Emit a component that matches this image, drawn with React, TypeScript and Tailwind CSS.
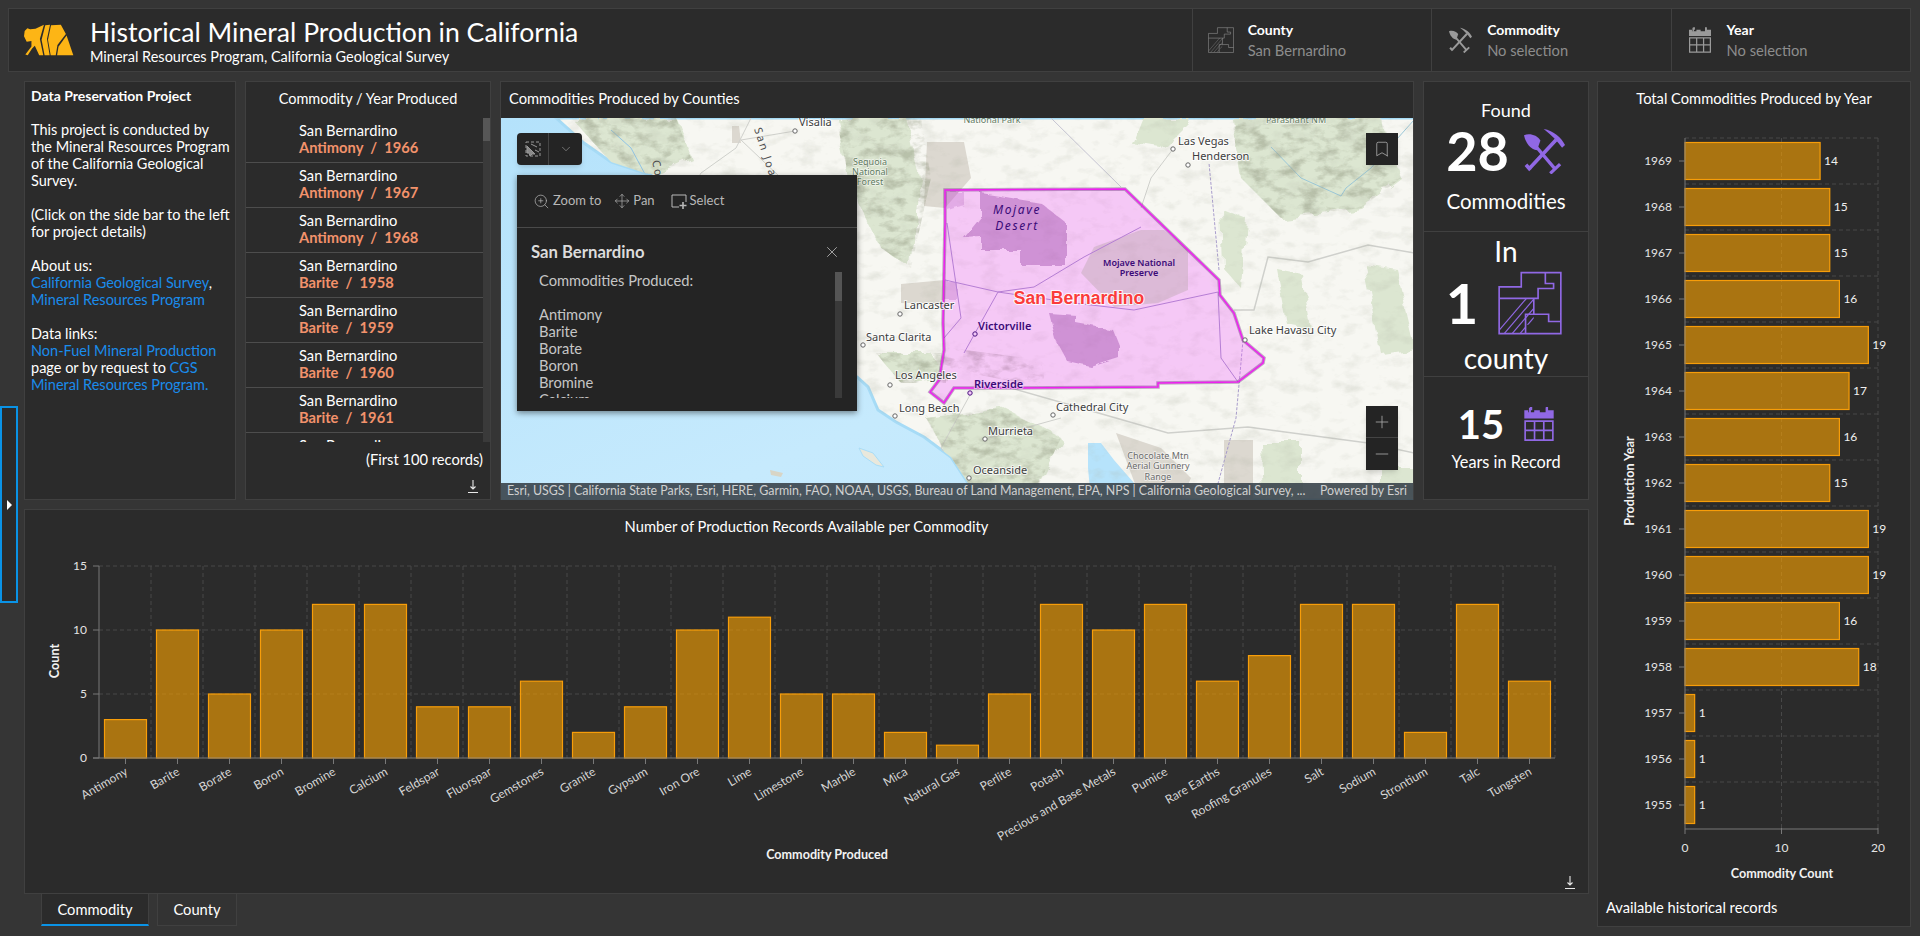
import React from "react";
import { ZoomIn, Move, X, Plus, Minus, ChevronDown, Bookmark } from "lucide-react";

const commodityData: [string, number][] = [
  ["Antimony", 3], ["Barite", 10], ["Borate", 5], ["Boron", 10], ["Bromine", 12], ["Calcium", 12], ["Feldspar", 4],
  ["Fluorspar", 4], ["Gemstones", 6], ["Granite", 2], ["Gypsum", 4], ["Iron Ore", 10], ["Lime", 11], ["Limestone", 5],
  ["Marble", 5], ["Mica", 2], ["Natural Gas", 1], ["Perlite", 5], ["Potash", 12], ["Precious and Base Metals", 10],
  ["Pumice", 12], ["Rare Earths", 6], ["Roofing Granules", 8], ["Salt", 12], ["Sodium", 12], ["Strontium", 2], ["Talc", 12], ["Tungsten", 6],
];
const yearData: [number, number][] = [
  [1969, 14], [1968, 15], [1967, 15], [1966, 16], [1965, 19], [1964, 17], [1963, 16], [1962, 15], [1961, 19], [1960, 19], [1959, 16], [1958, 18], [1957, 1], [1956, 1], [1955, 1],
];
const records: [string, number][] = [
  ["Antimony", 1966], ["Antimony", 1967], ["Antimony", 1968], ["Barite", 1958], ["Barite", 1959], ["Barite", 1960], ["Barite", 1961], ["Barite", 1962],
];

const BAR_FILL = "#ffa500";
const BAR_STROKE = "#f79d09";
const GRID = "#484848";
const AXIS = "#787878";

function Bear() {
  return (
    <svg width="50" height="32" viewBox="26 26 148 94" fill="#fdb515" className="shrink-0">
      <path d="M28 46 L36 38 L44 41 L60 40 L85 28 L73 70 L83 118 L71 118 L58 90 L50 98 L37 118 L30 116 L48 92 L48 76 L34 78 L26 62 Z" />
      <path d="M89 29 L103 28 L94 70 L102 118 L87 118 L78 72 Z" />
      <path d="M106 29 L135 28 L150 55 L125 88 L120 118 L105 118 L97 72 Z" />
      <path d="M152 60 L172 118 L124 118 L128 93 Z" />
    </svg>
  );
}

function PickIcon({ color, width, height }: { color: string; width: number; height: number }) {
  return (
    <svg width={width} height={height} viewBox="0 0 125 140" className="shrink-0">
      <path d="M0 22 C18 15 40 22 50 38 L40 68 C20 65 5 45 0 22 Z" fill={color} />
      <path d="M38 58 L95 125 M80 138 L110 110" stroke={color} strokeWidth="10" fill="none" />
      <path d="M60 3 C90 8 115 30 125 52 L116 60 C102 40 85 22 60 3 Z" fill={color} />
      <path d="M98 36 L18 122 M6 112 L20 128" stroke={color} strokeWidth="11" fill="none" />
    </svg>
  );
}

function CountyIcon({ color, width, height, id, sw }: { color: string; width: number; height: number; id: string; sw: number }) {
  return (
    <svg width={width} height={height} viewBox="-3 -3 193 194" className="shrink-0">
      <defs>
        <clipPath id={id}>
          <path d="M0 80 H105 V160 H80 V187 H0 Z" />
        </clipPath>
      </defs>
      <g clipPath={`url(#${id})`} stroke={color} strokeWidth={sw * 0.7}>
        {Array.from({ length: 12 }).map((_, i) => (
          <line key={i} x1={-20 + i * 24} y1="200" x2={100 + i * 24} y2="60" />
        ))}
      </g>
      <path
        d="M67 2 H187 V187 H0 V45 H67 Z M0 80 H118 V50 H165 V35 H140 V2 M105 80 V128 H80 V187 M105 128 H150 V150 H187"
        fill="none"
        stroke={color}
        strokeWidth={sw}
      />
    </svg>
  );
}

function CalendarIcon({ color, width, height }: { color: string; width: number; height: number }) {
  return (
    <svg width={width} height={height} viewBox="0 0 89 103" className="shrink-0">
      <path d="M0 10 H17 V0 H24 V10 H30 V16 H12 V10 M0 10 V35 H89 V10 H72 V0 H65 V16 H47 V10 H0 Z" fill={color} />
      <path d="M17 2 V18 M68 2 V18" stroke={color} strokeWidth="6" />
      <path d="M2.5 43 H86.5 V100.5 H2.5 Z M31 43 V100 M59 43 V100 M2 71 H87" fill="none" stroke={color} strokeWidth="5" />
    </svg>
  );
}

function Download({ className }: { className?: string }) {
  return (
    <svg width="10" height="14" viewBox="0 0 10 14" className={className}>
      <path d="M5 0 V9 M2.5 6.5 L5 9 L7.5 6.5 M0 12.5 H10" fill="none" stroke="#e8e8e8" strokeWidth="1.1" />
    </svg>
  );
}

function Selector({ title, value, icon }: { title: string; value: string; icon: React.ReactNode }) {
  return (
    <div className="flex h-full w-[239.5px] items-center border-l border-[#404040]">
      <div className="flex w-[55px] justify-center pl-[2px]">{icon}</div>
      <div className="flex flex-col">
        <span className="text-[14px] leading-[21px] font-bold text-white">{title}</span>
        <span className="text-[14.7px] leading-[21px] text-[#8d8d8d]">{value}</span>
      </div>
    </div>
  );
}

function BottomChart() {
  const x0 = 99, y0 = 758, unit = 12.8, pitch = 52;
  return (
    <svg width="1563" height="328" viewBox="25 544 1563 328" className="block">
      {[5, 10, 15].map((v) => (
        <line key={v} x1={x0} x2={1555} y1={y0 - v * unit} y2={y0 - v * unit} stroke={GRID} strokeDasharray="4 3" />
      ))}
      {commodityData.map((_, i) => (
        <line key={i} x1={x0 + (i + 1) * pitch} x2={x0 + (i + 1) * pitch} y1={566} y2={y0} stroke={GRID} strokeDasharray="4 3" />
      ))}
      {commodityData.map(([n, v], i) => {
        const cx = x0 + i * pitch + 26.5;
        return (
          <g key={n}>
            <rect x={cx - 21} y={y0 - v * unit} width={42} height={v * unit} fill={BAR_FILL} fillOpacity={0.6} stroke={BAR_STROKE} strokeWidth={1.2} />
            <line x1={cx} x2={cx} y1={y0} y2={y0 + 6} stroke={AXIS} />
            <text x={cx + 3} y={y0 + 16} textAnchor="end" transform={`rotate(-30 ${cx + 3} ${y0 + 16})`} fontSize="12" fill="#d6d6d6">
              {n}
            </text>
          </g>
        );
      })}
      <line x1={x0} x2={x0} y1={566} y2={y0} stroke={AXIS} />
      <line x1={93} x2={1555} y1={y0} y2={y0} stroke={AXIS} />
      {[0, 5, 10, 15].map((v) => (
        <g key={v}>
          <line x1={93} x2={x0} y1={y0 - v * unit} y2={y0 - v * unit} stroke={AXIS} />
          <text x={87} y={y0 - v * unit + 4} textAnchor="end" fontSize="12" fill="#e4e4e4">{v}</text>
        </g>
      ))}
      <text x={59} y={661} textAnchor="middle" transform="rotate(-90 59 661)" fontSize="12.6" fontWeight="700" fill="#f2f2f2">Count</text>
      <text x={827} y={859} textAnchor="middle" fontSize="12.6" fontWeight="700" fill="#f2f2f2">Commodity Produced</text>
    </svg>
  );
}

function RightChart() {
  const x0 = 1685, top = 138, band = 46, unit = 9.65, bottom = 828;
  return (
    <svg width="312" height="770" viewBox="1598 118 312 770" className="block">
      {yearData.map((_, i) => (
        <line key={i} x1={x0} x2={1878} y1={top + i * band} y2={top + i * band} stroke={GRID} strokeDasharray="4 3" />
      ))}
      {[10, 20].map((v) => (
        <line key={v} x1={x0 + v * unit} x2={x0 + v * unit} y1={top} y2={bottom} stroke={GRID} strokeDasharray="4 3" />
      ))}
      {yearData.map(([y, v], i) => {
        const by = top + i * band + 4.5;
        return (
          <g key={y}>
            <rect x={x0} y={by} width={v * unit} height={37} fill={BAR_FILL} fillOpacity={0.6} stroke={BAR_STROKE} strokeWidth={1.2} />
            <line x1={1679} x2={x0} y1={by + 18.5} y2={by + 18.5} stroke={AXIS} />
            <text x={1672} y={by + 22.5} textAnchor="end" fontSize="12" fill="#e4e4e4">{y}</text>
            <text x={x0 + v * unit + 4} y={by + 22.5} fontSize="12" fill="#f0f0f0">{v}</text>
          </g>
        );
      })}
      <line x1={x0} x2={x0} y1={top} y2={bottom} stroke={AXIS} />
      <line x1={x0} x2={1878} y1={bottom + 1} y2={bottom + 1} stroke={AXIS} />
      {[0, 10, 20].map((v) => (
        <g key={v}>
          <line x1={x0 + v * unit} x2={x0 + v * unit} y1={bottom} y2={bottom + 6} stroke={AXIS} />
          <text x={x0 + v * unit} y={852} textAnchor="middle" fontSize="12" fill="#e4e4e4">{v}</text>
        </g>
      ))}
      <text x={1782} y={878} textAnchor="middle" fontSize="12.6" fontWeight="700" fill="#f2f2f2">Commodity Count</text>
      <text x={1634} y={481} textAnchor="middle" transform="rotate(-90 1634 481)" fontSize="12.6" fontWeight="700" fill="#f2f2f2">Production Year</text>
    </svg>
  );
}

function City({ x, y, cx, cy, children, dark }: { x: number; y: number; cx: number; cy: number; children: string; dark?: boolean }) {
  return (
    <g>
      <circle cx={cx} cy={cy} r="2.2" fill={dark ? "#f3c8f8" : "#fff"} stroke={dark ? "#4a1280" : "#666"} strokeWidth="1" />
      <text
        x={x}
        y={y + 4}
        fontSize="11"
        fontWeight={dark ? 600 : 400}
        fill={dark ? "#3c0a78" : "#3e3e3e"}
        stroke={dark ? "#f3c8f8" : "#ffffff"}
        strokeOpacity="0.75"
        strokeWidth="2"
        paintOrder="stroke"
        className="font-['Noto_Sans',sans-serif]"
      >
        {children}
      </text>
    </g>
  );
}

function MapArt() {
  const county = "M444 72 L624 71 L718 162 L719 177 L733 195 L742 222 L763 240 L762 245 L737 264 L657 265 L657 269 L510 270 L453 270 L443 285 L429 274 L438 262 L443 232 L442 205 L444 105 Z";
  const land = "M55 0 L83 25 L110 44 L150 57 L200 120 L280 200 L340 250 L356 259 L367 269 L377 292 L395 304 L423 319 L450 339 L467 365 L472 382 L914 382 L914 0 Z";
  const mountains = "M70 0 L175 0 L190 40 L150 58 L110 44 Z M335 0 L420 0 L430 60 L410 150 L380 130 L350 70 Z M730 0 L880 0 L900 60 L860 90 L780 100 L740 60 Z M425 300 L500 290 L560 320 L530 382 L470 382 Z M375 235 L445 235 L445 265 L400 265 Z M443 229 L540 242 L545 270 L443 250 Z";
  return (
    <svg width="914" height="382" viewBox="0 0 914 382" className="block">
      <defs>
        <filter id="rough" x="-5%" y="-5%" width="110%" height="110%">
          <feTurbulence type="fractalNoise" baseFrequency="0.05" numOctaves="3" seed="7" />
          <feDisplacementMap in="SourceGraphic" scale="14" />
        </filter>
        <filter id="roughSmall" x="-5%" y="-5%" width="110%" height="110%">
          <feTurbulence type="fractalNoise" baseFrequency="0.08" numOctaves="2" seed="3" />
          <feDisplacementMap in="SourceGraphic" scale="7" />
        </filter>
        <filter id="shade" x="0" y="0" width="100%" height="100%">
          <feTurbulence type="fractalNoise" baseFrequency="0.05 0.08" numOctaves="4" seed="11" />
          <feColorMatrix values="0 0 0 0 0.42  0 0 0 0 0.44  0 0 0 0 0.36  1.2 0 0 0 -0.6" />
        </filter>
        <filter id="shadeHard" x="0" y="0" width="100%" height="100%">
          <feTurbulence type="fractalNoise" baseFrequency="0.06 0.1" numOctaves="4" seed="5" />
          <feColorMatrix values="0 0 0 0 0.33  0 0 0 0 0.36  0 0 0 0 0.26  3 0 0 0 -1.35" />
        </filter>
        <clipPath id="landClip"><path d={land} /></clipPath>
        <clipPath id="countyClip"><path d={county} /></clipPath>
        <clipPath id="mountainClip"><path d={mountains} /></clipPath>
        <linearGradient id="sea" x1="0" y1="0" x2="1" y2="1">
          <stop offset="0" stopColor="#b4e2fb" />
          <stop offset="0.6" stopColor="#c6eafd" />
          <stop offset="1" stopColor="#bfe7fc" />
        </linearGradient>
      </defs>
      <rect width="914" height="382" fill="url(#sea)" />
      <path d={land} fill="#f7f7f2" stroke="#a6dbf6" strokeWidth="3" />
      <path d="M269 352 L282 355 L280 359 L270 357 Z" fill="#d8d5c6" />
      <path d="M358 330 L372 335 L383 349 L375 347 L362 338 Z" fill="#e9e8dc" stroke="#a9ddf7" />
      <g clipPath="url(#landClip)">
        <g filter="url(#rough)" fill="#dce6d1">
          <path d="M70 0 L175 0 L190 40 L150 58 L110 44 Z" />
          <path d="M335 0 L405 0 L420 60 L410 150 L380 130 L350 70 Z" />
          <path d="M730 0 L880 0 L900 60 L860 90 L780 100 L740 60 Z" />
          <path d="M640 0 L690 0 L660 30 L630 25 Z" />
          <path d="M425 300 L500 290 L560 320 L530 382 L470 382 Z" />
          <path d="M375 235 L430 235 L445 260 L400 265 Z" />
          <path d="M720 90 L745 100 L740 170 L722 150 Z" />
          <path d="M775 150 L800 155 L810 210 L785 205 Z" />
          <path d="M862 145 L895 150 L914 230 L880 235 Z" />
          <path d="M760 325 L800 325 L800 382 L762 382 Z" />
          <path d="M880 350 L914 350 L914 382 L880 382 Z" />
        </g>
        <g fill="#dcd8d0">
          <path d="M426 24 L463 24 L470 60 L444 90 L423 88 Z" />
          <path d="M400 166 L444 162 L444 185 L400 185 Z" />
          <path d="M723 322 L752 322 L752 382 L723 382 Z" />
          <path d="M615 315 L660 330 L690 360 L680 382 L640 382 Z" />
          <path d="M231 8 L238 8 L240 25 L231 25 Z" />
        </g>
        <path d="M587 325 L600 325 L613 342 L633 365 L640 382 L590 382 L587 350 Z" fill="#b6e3fb" />
        <g fill="none" stroke="#cfd0cc" strokeWidth="1">
          <path d="M733 192 L753 192 L767 139 L807 144 L867 127 L913 135" strokeWidth="1.5" />
          <path d="M510 270 L587 292 L667 315 L747 309 L867 325 L913 335" strokeWidth="1.5" />
          <path d="M550 0 L620 69" stroke="#c5c4d2" />
          <path d="M672 31 L650 60 L640 90" />
          <path d="M250 0 L235 30 L200 55 L180 90 M294 13 L240 22 L280 60 M470 275 L440 330 L470 380 M484 321 L560 300" />
        </g>
        <path d="M770 29 L800 60 L840 78 L845 70 L870 50 L913 2" fill="none" stroke="#9ac7d8" strokeWidth="1" />
        <path d="M110 12 L130 30 L145 58" fill="none" stroke="#8fc4e6" strokeWidth="1" />
        <path d="M718 152 L708 45 M742 222 L735 300 L713 380" fill="none" stroke="#a89ccc" strokeWidth="1" strokeDasharray="3 1.5" />
        <rect width="914" height="382" filter="url(#shade)" opacity="0.5" />
        <g clipPath="url(#mountainClip)">
          <rect width="914" height="382" filter="url(#shadeHard)" opacity="0.55" />
        </g>
      </g>
      <g clipPath="url(#countyClip)">
        <rect width="914" height="382" fill="#f35cff" fillOpacity="0.3" />
        <g fill="#8a2f9c" fillOpacity="0.36" filter="url(#roughSmall)">
          <path d="M480 75 L540 85 L565 105 L565 147 L520 147 L520 132 L480 132 L480 119 L463 120 L480 99 Z" />
          <path d="M548 195 L575 197 L575 205 L612 212 L618 227 L618 240 L590 249 L567 244 L555 222 Z" />
          <path d="M444 74 L463 74 L463 87 L447 92 Z" fillOpacity="0.18" />
          <path d="M443 164 L455 164 L455 182 L443 182 Z" fillOpacity="0.2" />
        </g>
        <path d="M640 112 L663 112 L687 132 L687 172 L657 185 L613 189 L580 155 L593 129 Z" fill="#b9a6ac" fillOpacity="0.42" />
        <g fill="none" stroke="#b57ed4" strokeWidth="1">
          <path d="M444 162 L497 174 L533 169 L583 139 L640 109" />
          <path d="M497 174 L483 199 L463 235" />
          <path d="M497 174 L573 185 L633 192 L717 174" />
          <path d="M446 105 L460 200 L443 220 M717 174 L720 240 L737 264" />
        </g>
      </g>
      <path d={county} fill="none" stroke="#5a1a6c" strokeOpacity="0.35" strokeWidth="3.5" />
      <path d={county} fill="none" stroke="#ef1ff0" strokeWidth="1.5" />

      <City x={298} y={4} cx={294} cy={13}>Visalia</City>
      <City x={677} y={23} cx={672} cy={31}>Las Vegas</City>
      <City x={691} y={38} cx={687} cy={47}>Henderson</City>
      <City x={403} y={187} cx={399} cy={196}>Lancaster</City>
      <City x={365} y={219} cx={362} cy={227}>Santa Clarita</City>
      <City x={394} y={257} cx={389} cy={267}>Los Angeles</City>
      <City x={398} y={290} cx={394} cy={298}>Long Beach</City>
      <City x={748} y={212} cx={744} cy={222}>Lake Havasu City</City>
      <City x={477} y={208} cx={474} cy={216} dark>Victorville</City>
      <City x={473} y={266} cx={469} cy={275} dark>Riverside</City>
      <City x={555} y={289} cx={552} cy={297}>Cathedral City</City>
      <City x={487} y={313} cx={484} cy={321}>Murrieta</City>
      <City x={472} y={352} cx={468} cy={360}>Oceanside</City>

      <g className="font-['Noto_Sans',sans-serif]" fontSize="9" textAnchor="middle" stroke="#fff" strokeOpacity="0.6" strokeWidth="1.5" paintOrder="stroke">
        <g fill="#5f7a5f">
          <text x={369} y={47}>Sequoia</text>
          <text x={369} y={57}>National</text>
          <text x={369} y={67}>Forest</text>
          <text x={491} y={5}>National Park</text>
          <text x={795} y={5}>Parashant NM</text>
        </g>
        <g fill="#6a6a6a">
          <text x={657} y={341}>Chocolate Mtn</text>
          <text x={657} y={351}>Aerial Gunnery</text>
          <text x={657} y={362}>Range</text>
        </g>
        <g fill="#3a0a78" fontWeight="600" stroke="none">
          <text x={638} y={148}>Mojave National</text>
          <text x={638} y={158}>Preserve</text>
        </g>
      </g>
      <g className="font-['Noto_Sans',sans-serif]" fontSize="12" fontStyle="italic" fill="#3a0a78" textAnchor="middle" letterSpacing="1.6">
        <text x={516} y={96}>Mojave</text>
        <text x={516} y={112}>Desert</text>
      </g>
      <g className="font-['Noto_Sans',sans-serif]" fontSize="11" fill="#4a4a4a" letterSpacing="2">
        <text transform="translate(253 11) rotate(72)">San Joaquin</text>
        <text transform="translate(151 43) rotate(78)">Coast</text>
      </g>
      <text
        x={578}
        y={186}
        textAnchor="middle"
        fontSize="17.5"
        fontWeight="700"
        fill="#fb3b3b"
        stroke="#fff"
        strokeOpacity="0.85"
        strokeWidth="2"
        paintOrder="stroke"
        className="font-['Liberation_Sans',sans-serif]"
      >
        San Bernardino
      </text>
    </svg>
  );
}

function SketchIcon() {
  return (
    <svg width="16" height="16" viewBox="0 0 16 16" fill="none" stroke="#9a9a9a" strokeWidth="1">
      <path d="M1 1 H15 V15 H1 Z" strokeDasharray="3 2" />
      <path d="M2 5 L10 13 L7 13 L5 15 L4 12 L2 12 Z M6 3 L12 6 M10 9 L14 11" fill="#8a8a8a" />
    </svg>
  );
}

export default function App() {
  return (
    <div className="relative flex h-[936px] w-[1920px] flex-col overflow-hidden bg-[#353535] pt-2 font-['Lato',sans-serif] text-white">
      {/* sidebar toggle */}
      <div className="absolute top-[406px] left-0 z-10 flex h-[197px] w-[18px] items-center justify-center border-2 border-[#0a93e6] bg-[#2b2b2b]">
        <div className="h-0 w-0 border-y-[5px] border-l-[5px] border-y-transparent border-l-white" />
      </div>

      {/* header */}
      <header className="mr-[9px] ml-2 flex h-16 shrink-0 items-center border border-[#404040] bg-[#2b2b2b]">
        <div className="flex w-[1183px] items-center">
          <div className="w-[81px] pl-[15px]"><Bear /></div>
          <div className="flex flex-col">
            <h1 className="text-[26.6px] leading-[34px] font-normal">Historical Mineral Production in California</h1>
            <p className="text-[14.5px] leading-[16px]">Mineral Resources Program, California Geological Survey</p>
          </div>
        </div>
        <Selector title="County" value="San Bernardino" icon={<CountyIcon id="c1" color="#9a9a9a" width={26} height={26} sw={4} />} />
        <Selector title="Commodity" value="No selection" icon={<PickIcon color="#9a9a9a" width={23} height={26} />} />
        <Selector title="Year" value="No selection" icon={<CalendarIcon color="#9a9a9a" width={22} height={26} />} />
      </header>

      <div className="flex flex-1 gap-2 pt-[9px] pl-6">
        <div className="flex w-[1565px] flex-col">
          <div className="flex h-[419px] gap-[9px]">
            {/* text panel */}
            <section className="w-[212px] border border-[#404040] bg-[#2b2b2b] pt-[5px] pl-[6px] text-[14.5px] leading-[17px] whitespace-nowrap">
              <p className="text-[14px] font-bold">Data Preservation Project</p>
              <p className="mt-[17px]">This project is conducted by<br />the Mineral Resources Program<br />of the California Geological<br />Survey.</p>
              <p className="mt-[17px]">(Click on the side bar to the left<br />for project details)</p>
              <p className="mt-[17px]">About us:<br /><span className="text-[#1a8cec]">California Geological Survey</span>,<br /><span className="text-[#1a8cec]">Mineral Resources Program</span></p>
              <p className="mt-[17px]">Data links:<br /><span className="text-[#1a8cec]">Non-Fuel Mineral Production</span><br />page or by request to <span className="text-[#1a8cec]">CGS</span><br /><span className="text-[#1a8cec]">Mineral Resources Program.</span></p>
            </section>

            {/* list panel */}
            <section className="flex w-[246px] flex-col border border-[#404040] bg-[#2b2b2b]">
              <h2 className="flex h-9 shrink-0 items-center justify-center pb-[3px] text-[14.5px] font-normal">Commodity / Year Produced</h2>
              <div className="flex h-[324px] overflow-hidden">
                <ul className="flex-1 overflow-hidden">
                  {records.map(([c, y]) => (
                    <li key={y} className="h-[45px] border-b border-[#4d4d4d] pt-[4px] pl-[53px] text-[14.7px] leading-[17px]">
                      <div>San Bernardino</div>
                      <div className="font-bold text-[#f2926b]">{c}&nbsp;&nbsp;/&nbsp;&nbsp;{y}</div>
                    </li>
                  ))}
                </ul>
                <div className="w-[7px] bg-[#3a3a3a]"><div className="h-[23px] bg-[#565656]" /></div>
              </div>
              <div className="pt-[9px] pr-[7px] text-right text-[14.7px] leading-[17px]">(First 100 records)</div>
              <div className="flex justify-end pt-[12px] pr-[12px]"><Download /></div>
            </section>

            {/* map panel */}
            <section className="flex w-[914px] flex-col border-x border-t border-[#404040] bg-[#2b2b2b]">
              <h2 className="flex h-9 shrink-0 items-center pb-[3px] pl-2 text-[14.7px] font-normal">Commodities Produced by Counties</h2>
              <div className="relative h-[382px] overflow-hidden">
                <MapArt />
                <div className="absolute top-[15px] left-[16px] flex h-8 w-[65px] items-center rounded-sm bg-[#242424] shadow-md">
                  <div className="flex h-full w-8 items-center justify-center border-r border-[#444]"><SketchIcon /></div>
                  <div className="flex flex-1 justify-center"><ChevronDown size={14} strokeWidth={1} color="#aaa" /></div>
                </div>
                <div className="absolute top-[15px] right-[15px] flex h-8 w-8 items-center justify-center bg-[#242424] shadow-md">
                  <Bookmark size={18} strokeWidth={1} color="#b5b5b5" />
                </div>
                <div className="absolute top-[288px] right-[15px] flex h-16 w-8 flex-col bg-[#242424] shadow-md">
                  <div className="flex h-8 items-center justify-center border-b border-[#444]"><Plus size={20} strokeWidth={1} color="#a8a8a8" /></div>
                  <div className="flex h-8 items-center justify-center"><Minus size={20} strokeWidth={1} color="#a8a8a8" /></div>
                </div>

                {/* popup */}
                <div className="absolute top-[57px] left-[16px] flex h-[236px] w-[340px] flex-col bg-[#242424] text-[#b8b8b8] shadow-[0_2px_6px_rgba(0,0,0,0.45)]">
                  <div className="flex h-[53px] shrink-0 items-center gap-[13px] border-b border-[#4a4a4a] pl-4 text-[13px]">
                    <span className="flex items-center gap-[3px]"><ZoomIn size={17} strokeWidth={1} />Zoom to</span>
                    <span className="flex items-center gap-[3px]"><Move size={16} strokeWidth={1} />Pan</span>
                    <span className="ml-[3px] flex items-center gap-[3px]">
                      <svg width="16" height="15" viewBox="0 0 16 15" fill="none" stroke="#b8b8b8" strokeWidth="1">
                        <path d="M15 8 V1 H1 V13 H8" />
                        <path d="M12 8 V15 M8.5 11.5 H15.5" strokeWidth="1.6" />
                      </svg>
                      Select
                    </span>
                  </div>
                  <div className="flex items-start justify-between pt-[14px] pr-[16px] pl-[14px]">
                    <span className="text-[16.7px] leading-[20px] font-bold text-[#dcdcdc]">San Bernardino</span>
                    <X size={18} strokeWidth={1} color="#c8c8c8" className="mt-[1px]" />
                  </div>
                  <div className="mt-[10px] flex h-[126px] pr-[15px] pl-[22px]">
                    <div className="flex-1 overflow-hidden text-[14.7px] leading-[17px] text-[#c6c6c6]">
                      Commodities Produced:<br /><br />Antimony<br />Barite<br />Borate<br />Boron<br />Bromine<br />Calcium
                    </div>
                    <div className="w-[7px] bg-[#3a3a3a]"><div className="h-[29px] bg-[#555]" /></div>
                  </div>
                </div>

                {/* attribution */}
                <div className="absolute right-0 bottom-0 left-0 flex h-[17px] items-center justify-between bg-[#3a444b]/90 px-[6px] text-[12.4px] text-[#d0d0d0]">
                  <span>Esri, USGS | California State Parks, Esri, HERE, Garmin, FAO, NOAA, USGS, Bureau of Land Management, EPA, NPS | California Geological Survey, ...</span>
                  <span>Powered by Esri</span>
                </div>
              </div>
            </section>

            {/* stats */}
            <section className="flex w-[166px] flex-col border border-[#404040] bg-[#2b2b2b]">
              <div className="flex h-[150px] flex-col items-center border-b border-[#404040]">
                <span className="mt-[16px] text-[18px] leading-[24px]">Found</span>
                <div className="flex h-[58px] items-center gap-[14px]">
                  <span className="text-[54px] leading-none font-bold">28</span>
                  <PickIcon color="#9068e4" width={43} height={46} />
                </div>
                <span className="mt-[8px] text-[20.5px] leading-[26px]">Commodities</span>
              </div>
              <div className="flex h-[145px] flex-col items-center border-b border-[#404040]">
                <span className="mt-[2px] text-[28px] leading-[34px]">In</span>
                <div className="flex h-[70px] items-center gap-[20px] pr-[4px]">
                  <span className="text-[56px] leading-none font-bold">1</span>
                  <CountyIcon id="c2" color="#9068e4" width={64} height={64} sw={5} />
                </div>
                <span className="mt-[3px] text-[28px] leading-[34px]">county</span>
              </div>
              <div className="flex flex-1 flex-col items-center">
                <div className="mt-[25px] flex items-center gap-[20px]">
                  <span className="text-[40px] leading-[44px] font-bold">15</span>
                  <CalendarIcon color="#9068e4" width={30} height={34} />
                </div>
                <span className="mt-[6px] text-[16.3px] leading-[20px]">Years in Record</span>
              </div>
            </section>
          </div>

          {/* bottom chart */}
          <section className="mt-[9px] flex h-[385px] flex-col border border-[#404040] bg-[#2b2b2b]">
            <h2 className="flex h-[34px] shrink-0 items-center justify-center pb-[1px] text-[14.7px] font-normal">Number of Production Records Available per Commodity</h2>
            <BottomChart />
            <div className="flex flex-1 items-center justify-end pr-[13px]"><Download /></div>
          </section>

          {/* tabs */}
          <div className="flex h-8 gap-2 pl-[17px]">
            <div className="flex w-[108px] items-center justify-center border-x border-[#404040] border-b-2 border-b-[#0a93e6] bg-[#2b2b2b] text-[14.7px]">Commodity</div>
            <div className="flex w-[80px] items-center justify-center border-x border-b border-[#404040] bg-[#333] text-[14.7px]">County</div>
          </div>
        </div>

        {/* right panel */}
        <section className="flex h-[846px] w-[314px] flex-col border border-[#404040] bg-[#2b2b2b]">
          <h2 className="flex h-9 shrink-0 items-center justify-center pb-[3px] text-[14.7px] font-normal">Total Commodities Produced by Year</h2>
          <RightChart />
          <div className="flex flex-1 items-center pl-2 text-[14.7px]">Available historical records</div>
        </section>
      </div>
    </div>
  );
}
